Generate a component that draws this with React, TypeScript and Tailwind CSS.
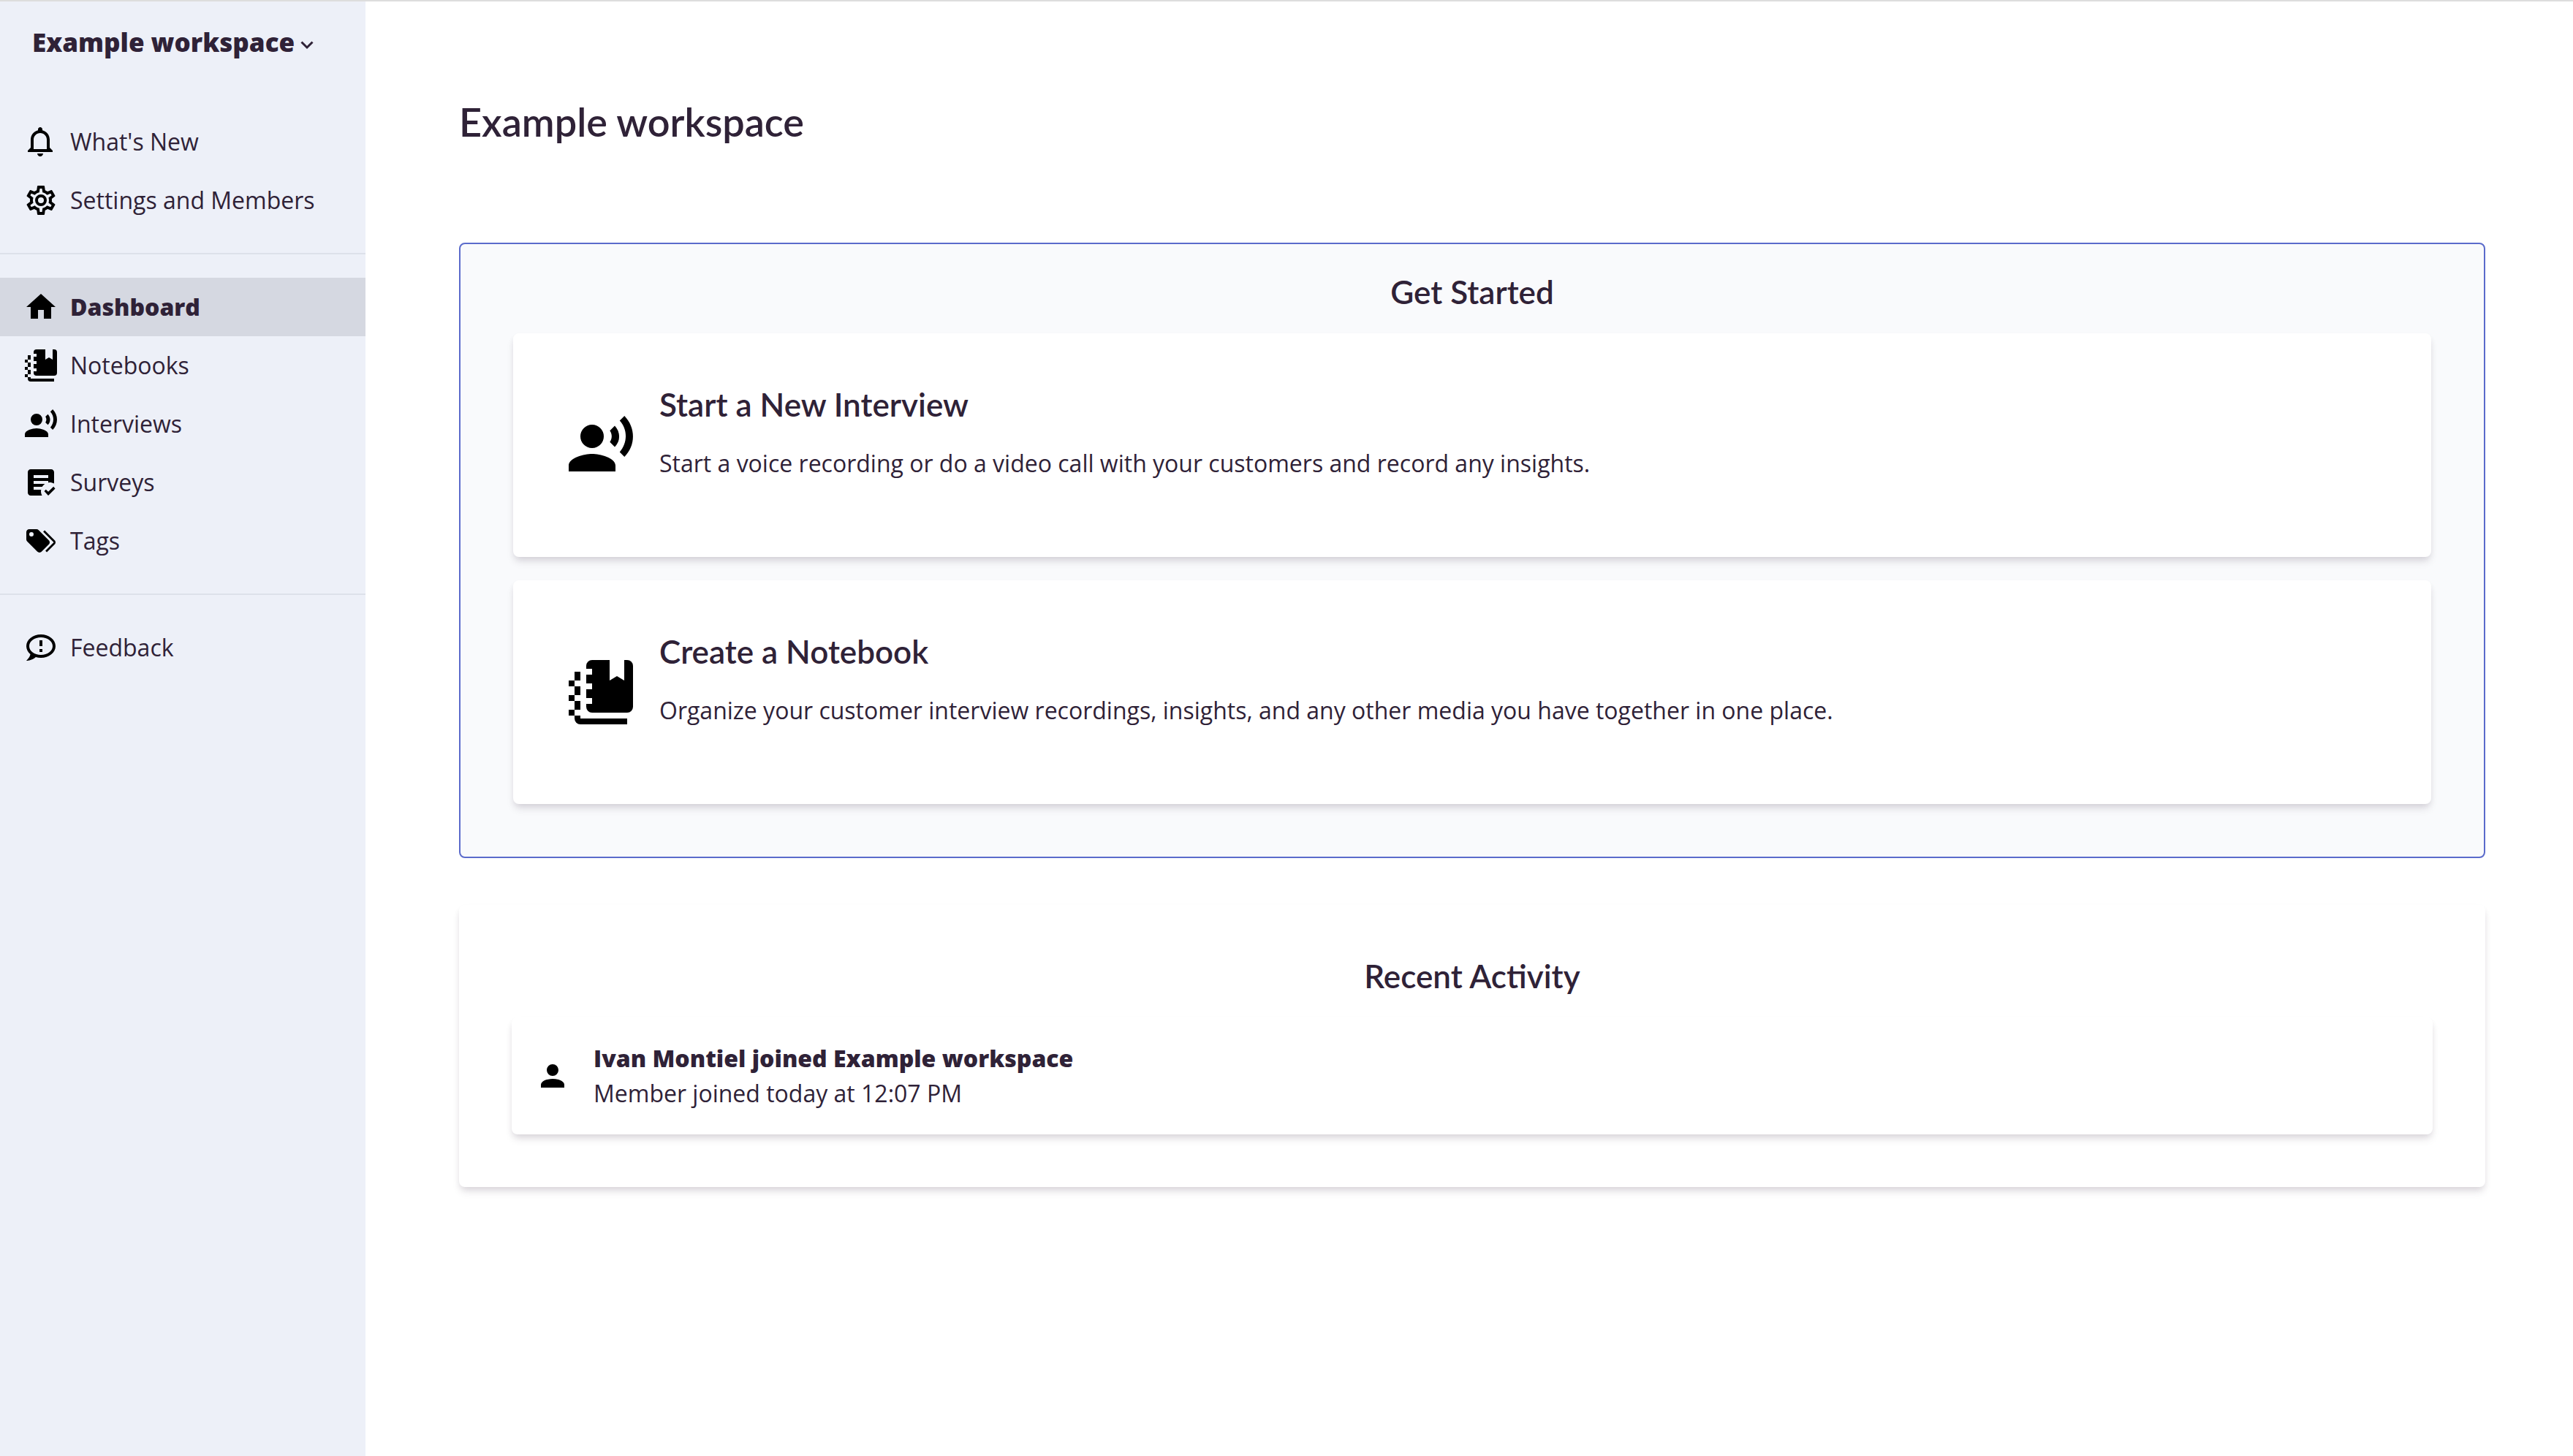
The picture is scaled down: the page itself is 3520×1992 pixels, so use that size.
import React from "react";

const icons = {
  bell: "M11.5 22c1.1 0 2-.9 2-2h-4c0 1.1.9 2 2 2zm6.5-6v-5.5c0-3.07-2.13-5.64-5-6.32V3.5c0-.83-.67-1.5-1.5-1.5S10 2.67 10 3.5v.68c-2.87.68-5 3.25-5 6.32V16l-2 2v1h17v-1l-2-2zm-2 1H7v-6.5C7 8.01 9.01 6 11.5 6S16 8.01 16 10.5V17z",
  cog: "M12,8A4,4 0 0,1 16,12A4,4 0 0,1 12,16A4,4 0 0,1 8,12A4,4 0 0,1 12,8M12,10A2,2 0 0,0 10,12A2,2 0 0,0 12,14A2,2 0 0,0 14,12A2,2 0 0,0 12,10M10,22C9.75,22 9.54,21.82 9.5,21.58L9.13,18.93C8.5,18.68 7.96,18.34 7.44,17.94L4.95,18.95C4.73,19.03 4.46,18.95 4.34,18.73L2.34,15.27C2.21,15.05 2.27,14.78 2.46,14.63L4.57,12.97L4.5,12L4.57,11L2.46,9.37C2.27,9.22 2.21,8.95 2.34,8.73L4.34,5.27C4.46,5.05 4.73,4.96 4.95,5.05L7.44,6.05C7.96,5.66 8.5,5.32 9.13,5.07L9.5,2.42C9.54,2.18 9.75,2 10,2H14C14.25,2 14.46,2.18 14.5,2.42L14.87,5.07C15.5,5.32 16.04,5.66 16.56,6.05L19.05,5.05C19.27,4.96 19.54,5.05 19.66,5.27L21.66,8.73C21.79,8.95 21.73,9.22 21.54,9.37L19.43,11L19.5,12L19.43,13L21.54,14.63C21.73,14.78 21.79,15.05 21.66,15.27L19.66,18.73C19.54,18.95 19.27,19.04 19.05,18.95L16.56,17.95C16.04,18.34 15.5,18.68 14.87,18.93L14.5,21.58C14.46,21.82 14.25,22 14,22H10M11.25,4L10.88,6.61C9.68,6.86 8.62,7.5 7.85,8.39L5.44,7.35L4.69,8.65L6.8,10.2C6.4,11.37 6.4,12.64 6.8,13.8L4.68,15.36L5.43,16.66L7.86,15.62C8.63,16.5 9.68,17.14 10.87,17.38L11.24,20H12.76L13.13,17.39C14.32,17.14 15.37,16.5 16.14,15.62L18.57,16.66L19.32,15.36L17.2,13.81C17.6,12.64 17.6,11.37 17.2,10.2L19.31,8.65L18.56,7.35L16.15,8.39C15.38,7.5 14.32,6.86 13.12,6.62L12.75,4H11.25Z",
  home: "M10 20v-6h4v6h5v-8h3L12 3 2 12h3v8z",
  notebook:
    "M9 1H15V8L17.5 6.5L20 8V1H21A2 2 0 0 1 23 3V17A2 2 0 0 1 21 19H9A2 2 0 0 1 7 17V16H9V14H7V11H9V9H7V6H9V4H7V3A2 2 0 0 1 9 1ZM3 5H5V8H3ZM1 8H3V10H1ZM3 10H5V13H3ZM1 13H3V15H1ZM3 15H5V18H3ZM1 18H3V20H1ZM3 20H5V21H21V23H5A2 2 0 0 1 3 21Z",
  voice:
    "M9 5A4 4 0 0 1 9 13A4 4 0 0 1 9 5ZM9 15c-2.67 0-8 1.34-8 4v2h16v-2c0-2.66-5.33-4-8-4zM16.76 5.36l-1.68 1.69c.84 1.18.84 2.71 0 3.89l1.68 1.69c2.02-2.02 2.02-5.07 0-7.27zM20.07 2l-1.63 1.63c2.77 3.02 2.77 7.56 0 10.74L20.07 16c3.9-3.89 3.91-9.95 0-14z",
  survey:
    "M17,21L14.25,18L15.41,16.84L17,18.43L20.59,14.84L21.75,16.25M12.8,21H5C3.89,21 3,20.11 3,19V5C3,3.89 3.89,3 5,3H19C20.11,3 21,3.89 21,5V12.8C20.12,12.29 19.09,12 18,12L17,12.08V11H7V13H14.69C13.07,14.07 12,15.91 12,18C12,19.09 12.29,20.12 12.8,21M7,7V9H17V7M7,15V17H12.08C12.2,16.28 12.45,15.61 12.8,15",
  tags: "M5.5,9A1.5,1.5 0 0,0 7,7.5A1.5,1.5 0 0,0 5.5,6A1.5,1.5 0 0,0 4,7.5A1.5,1.5 0 0,0 5.5,9M17.41,11.58C17.77,11.94 18,12.44 18,13C18,13.55 17.78,14.05 17.41,14.41L12.41,19.41C12.05,19.77 11.55,20 11,20C10.45,20 9.95,19.78 9.58,19.41L2.59,12.42C2.22,12.05 2,11.55 2,11V6C2,4.89 2.89,4 4,4H9C9.55,4 10.05,4.22 10.41,4.58L17.41,11.58M13.54,5.71L14.54,4.71L21.41,11.58C21.78,11.94 22,12.45 22,13C22,13.55 21.78,14.05 21.42,14.41L16.04,19.79L15.04,18.79L20.75,13L13.54,5.71Z",
  feedback:
    "M13,11H11V7H13V11M13,15H11V13H13V15M12,3C17.5,3 22,6.58 22,11C22,15.42 17.5,19 12,19C10.76,19 9.57,18.82 8.47,18.5C5.55,21 2,21 2,21C4.33,18.67 4.7,17.1 4.75,16.5C3.05,15.07 2,13.13 2,11C2,6.58 6.5,3 12,3M12,5C7.58,5 4,7.69 4,11C4,14.31 7.58,17 12,17C16.42,17 20,14.31 20,11C20,7.69 16.42,5 12,5Z",
  account:
    "M12,4A4,4 0 0,1 16,8A4,4 0 0,1 12,12A4,4 0 0,1 8,8A4,4 0 0,1 12,4M12,14C16.42,14 20,15.79 20,18V20H4V18C4,15.79 7.58,14 12,14Z",
};

type IconName = keyof typeof icons;

function Icon({ name, className }: { name: IconName; className: string }) {
  return (
    <svg viewBox="0 0 24 24" fill="#000" fillRule="evenodd" aria-hidden="true" className={className}>
      <path d={icons[name]} />
    </svg>
  );
}

function NavItem({ icon, label, active = false }: { icon: IconName; label: string; active?: boolean }) {
  return (
    <li>
      <a
        href="#"
        aria-current={active ? "page" : undefined}
        className={
          active
            ? "flex h-20 items-center gap-4 bg-[#d5d8e1] px-8 font-extrabold"
            : "flex h-20 items-center gap-4 px-8"
        }
      >
        <Icon name={icon} className="size-12 shrink-0" />
        {label}
      </a>
    </li>
  );
}

function ActionCard({ icon, title, text }: { icon: IconName; title: string; text: string }) {
  return (
    <button
      type="button"
      className="flex w-full items-center gap-8 rounded-lg bg-white px-18 py-16 text-left shadow-[0_8px_12px_-2px_rgba(47,34,55,0.12),0_4px_8px_-2px_rgba(47,34,55,0.1)]"
    >
      <Icon name={icon} className="size-24 shrink-0" />
      <span className="flex flex-col gap-6 pb-10">
        <span className="font-[Lato,sans-serif] text-[44px] leading-[66px] font-semibold">{title}</span>
        <span className="leading-12">{text}</span>
      </span>
    </button>
  );
}

export default function App() {
  return (
    <div className="flex min-h-screen border-t-2 border-[#dddddd] bg-white font-['Open_Sans',sans-serif] text-[32px] leading-12 text-[#2f2237]">
      <aside className="w-[500px] shrink-0 bg-[#edf0f8]">
        <button type="button" className="mb-14 flex h-24 items-center gap-2 pt-4 pl-11 text-[35px] font-extrabold">
          Example workspace
          <svg viewBox="0 0 18 12" fill="none" stroke="currentColor" strokeWidth="3" aria-hidden="true" className="mt-2 h-3 w-[18px]">
            <path d="M1.5 1.5L9 9L16.5 1.5" />
          </svg>
        </button>
        <nav aria-label="Workspace">
          <ul className="pb-8">
            <NavItem icon="bell" label="What's New" />
            <NavItem icon="cog" label="Settings and Members" />
          </ul>
          <ul className="border-t-2 border-[#dde1ea] py-8">
            <NavItem icon="home" label="Dashboard" active />
            <NavItem icon="notebook" label="Notebooks" />
            <NavItem icon="voice" label="Interviews" />
            <NavItem icon="survey" label="Surveys" />
            <NavItem icon="tags" label="Tags" />
          </ul>
          <ul className="border-t-2 border-[#dde1ea] py-8">
            <NavItem icon="feedback" label="Feedback" />
          </ul>
        </nav>
      </aside>

      <main className="min-w-0 flex-1 pt-32 pr-30 pl-32">
        <h1 className="font-[Lato,sans-serif] text-[54px] leading-[74px] font-semibold">Example workspace</h1>

        <section className="mt-32 rounded-lg border-2 border-[#5b6bcb] bg-[#f9fafc] px-18 pb-18">
          <h2 className="pt-8 pb-6 text-center font-[Lato,sans-serif] text-[44px] leading-[66px] font-semibold">
            Get Started
          </h2>
          <div className="flex flex-col gap-8">
            <ActionCard
              icon="voice"
              title="Start a New Interview"
              text="Start a voice recording or do a video call with your customers and record any insights."
            />
            <ActionCard
              icon="notebook"
              title="Create a Notebook"
              text="Organize your customer interview recordings, insights, and any other media you have together in one place."
            />
          </div>
        </section>

        <section className="mt-16 rounded-lg bg-white px-18 pb-18 shadow-[0_8px_12px_-2px_rgba(47,34,55,0.12),0_4px_8px_-2px_rgba(47,34,55,0.1)]">
          <h2 className="pt-16 pb-6 text-center font-[Lato,sans-serif] text-[44px] leading-[66px] font-semibold">
            Recent Activity
          </h2>
          <article className="flex items-center gap-8 rounded-lg bg-white p-8 shadow-[0_8px_12px_-2px_rgba(47,34,55,0.12),0_4px_8px_-2px_rgba(47,34,55,0.1)]">
            <Icon name="account" className="size-12 shrink-0" />
            <div>
              <p className="font-extrabold">Ivan Montiel joined Example workspace</p>
              <p>Member joined today at 12:07 PM</p>
            </div>
          </article>
        </section>
      </main>
    </div>
  );
}
